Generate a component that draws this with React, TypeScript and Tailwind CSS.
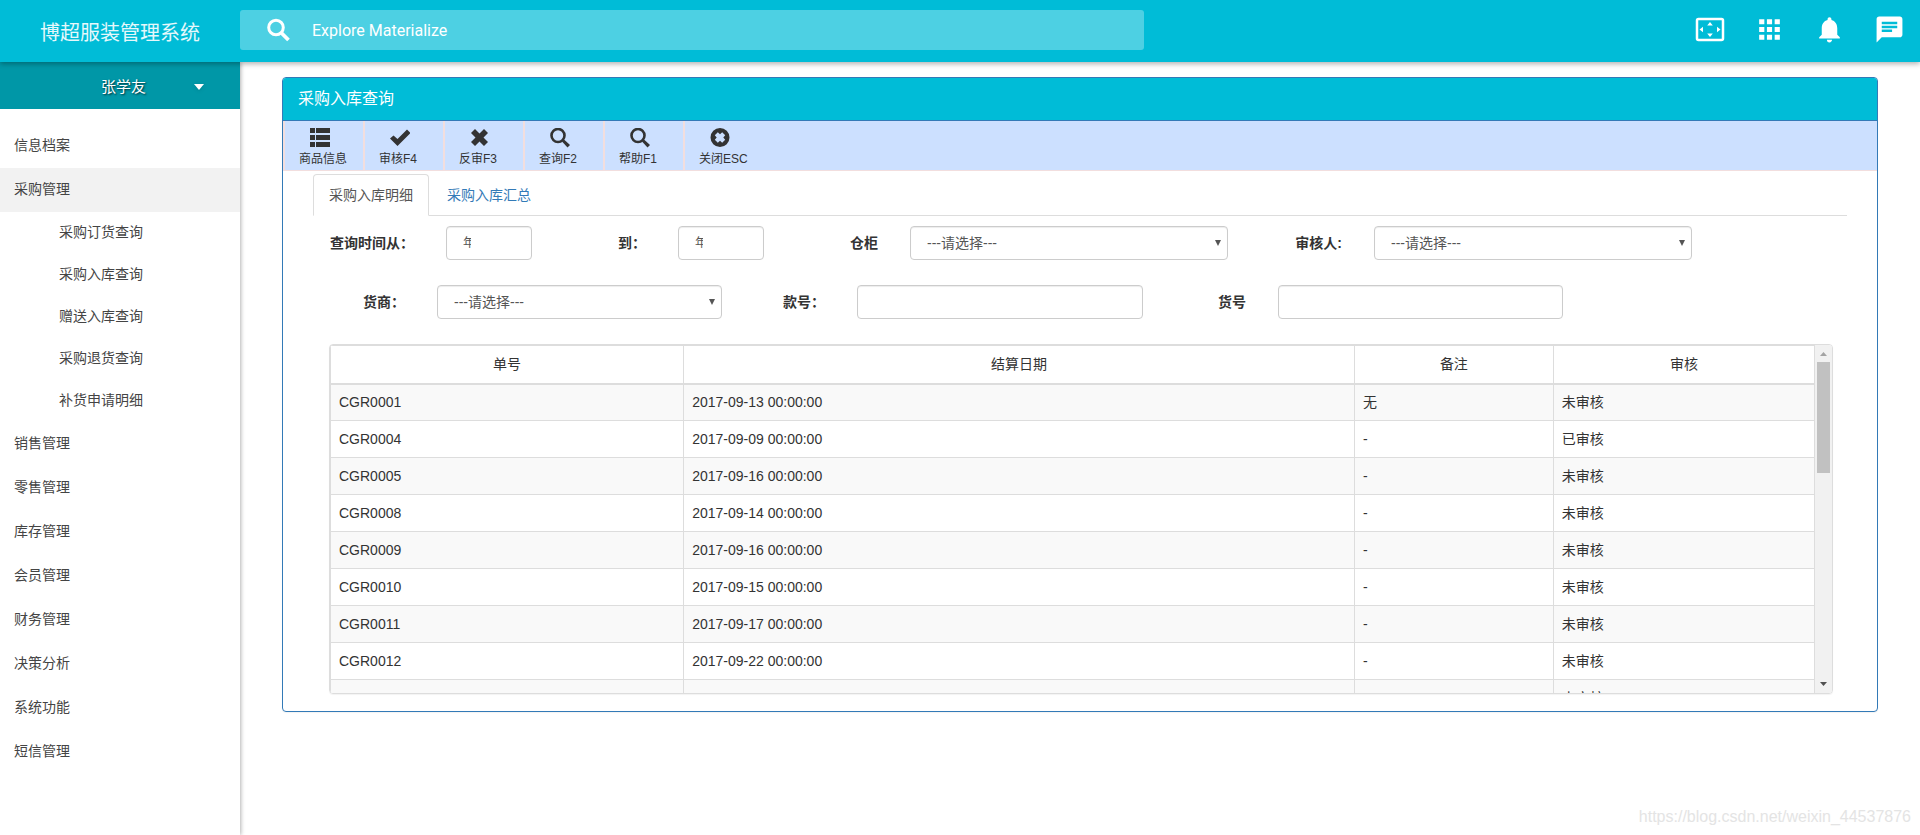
import React, { useState } from 'react';
import { MdApps, MdChat, MdNotifications } from 'react-icons/md';
import { clsx } from 'clsx';

type MenuItem = {
  label: string;
  children?: string[];
};

type Receipt = {
  no: string;
  date: string;
  remark: string;
  status: string;
};

const menu: MenuItem[] = [
  { label: '信息档案' },
  { label: '采购管理', children: ['采购订货查询', '采购入库查询', '赠送入库查询', '采购退货查询', '补货申请明细'] },
  { label: '销售管理' },
  { label: '零售管理' },
  { label: '库存管理' },
  { label: '会员管理' },
  { label: '财务管理' },
  { label: '决策分析' },
  { label: '系统功能' },
  { label: '短信管理' },
];

const receipts: Receipt[] = [
  { no: 'CGR0001', date: '2017-09-13 00:00:00', remark: '无', status: '未审核' },
  { no: 'CGR0004', date: '2017-09-09 00:00:00', remark: '-', status: '已审核' },
  { no: 'CGR0005', date: '2017-09-16 00:00:00', remark: '-', status: '未审核' },
  { no: 'CGR0008', date: '2017-09-14 00:00:00', remark: '-', status: '未审核' },
  { no: 'CGR0009', date: '2017-09-16 00:00:00', remark: '-', status: '未审核' },
  { no: 'CGR0010', date: '2017-09-15 00:00:00', remark: '-', status: '未审核' },
  { no: 'CGR0011', date: '2017-09-17 00:00:00', remark: '-', status: '未审核' },
  { no: 'CGR0012', date: '2017-09-22 00:00:00', remark: '-', status: '未审核' },
  { no: '', date: '', remark: '', status: '未审核' },
];

const listIcon = <path d="M0 0h5v5H0zM6 0h14v5H6zM0 7h5v5H0zM6 7h14v5H6zM0 14h5v5H0zM6 14h14v5H6z" />;
const checkIcon = <path d="M17 1.500 20.500 5 7.500 18 0 10.500 3.500 7.500l4 3.500z" />;
const removeIcon = (
  <path d="M5 1 9.500 5.500 14 1l4 4-4.500 4.500L18 14l-4 4-4.500-4.500L5 18l-4-4 4.500-4.500L1 5z" />
);
const searchIcon = (
  <>
    <circle cx="8" cy="7.500" r="6.500" fill="none" stroke="currentColor" strokeWidth="2.600" />
    <path d="m12 13.500 2-2 6 5.500-2.500 2.500z" />
  </>
);
const closeIcon = (
  <path
    fillRule="evenodd"
    d="M10 0a9.500 9.500 0 1 1 0 19 9.500 9.500 0 0 1 0-19zM10 6.200 7.800 4.300 4.800 7.300 6.700 9.500 4.800 11.700 7.800 14.700 10 12.800l2.200 1.900 3-3-1.900-2.200 1.900-2.200-3-3z"
  />
);

const tools = [
  { label: '商品信息', icon: listIcon },
  { label: '审核F4', icon: checkIcon },
  { label: '反审F3', icon: removeIcon },
  { label: '查询F2', icon: searchIcon },
  { label: '帮助F1', icon: searchIcon },
  { label: '关闭ESC', icon: closeIcon },
];

const tabs = ['采购入库明细', '采购入库汇总'];

const controlClass =
  'block w-full min-w-0 h-[34px] rounded-[4px] border border-[#ccc] bg-white pl-4 text-[#555] shadow-[inset_0_1px_1px_rgba(0,0,0,0.075)] outline-none focus:border-[#66afe9]';

function FieldLabel({ id, children }: { id: string; children: React.ReactNode }) {
  return (
    <label htmlFor={id} className="pr-8 text-right text-sm font-bold whitespace-nowrap">
      {children}
    </label>
  );
}

function SelectField({ id }: { id: string }) {
  return (
    <div className="relative">
      <select id={id} className={clsx(controlClass, 'appearance-none pr-6 text-sm')}>
        <option>---请选择---</option>
      </select>
      <svg className="pointer-events-none absolute top-[14px] right-[7px]" width="6" height="6" viewBox="0 0 6 6" fill="#555">
        <path d="M0 0h6L3 6z" />
      </svg>
    </div>
  );
}

function DateField({ id }: { id: string }) {
  return <input id={id} type="text" defaultValue="年/月/日" className={clsx(controlClass, 'pr-[60px] pb-[3px] text-xs')} />;
}

function Header() {
  return (
    <header className="relative z-20 flex h-[62px] items-center bg-[#00bcd7] text-white shadow-[0_2px_5px_rgba(0,0,0,0.3)]">
      <h1 className="w-[240px] shrink-0 pt-1 pl-10 text-xl font-normal whitespace-nowrap text-white/90">博超服装管理系统</h1>
      <div className="mb-[2px] flex h-10 w-[904px] shrink items-center rounded-[3px] bg-white/30 pl-[27px]">
        <svg className="shrink-0" width="24" height="24" viewBox="0 0 24 24" stroke="currentColor" fill="none">
          <circle cx="9" cy="9.500" r="7.300" strokeWidth="3" />
          <path d="m14.500 15 7 7" strokeWidth="3.800" />
        </svg>
        <input
          type="text"
          aria-label="Search"
          placeholder="Explore Materialize"
          className="ml-[21px] h-full w-full bg-transparent font-[Roboto] text-base placeholder-white outline-none"
        />
      </div>
      <nav className="ml-auto flex shrink-0 items-center gap-[29px] pr-[15px] pb-[3px]">
        <button type="button" aria-label="Fullscreen">
          <svg width="31" height="31" viewBox="0 0 31 31" fill="currentColor">
            <rect x="3" y="5" width="26" height="21" rx="1.500" fill="none" stroke="currentColor" strokeWidth="2.500" />
            <path d="M16 8l2.800 3.500h-5.600zM16 23l-2.800-3.500h5.600zM5.500 15.500 9 12.700v5.600zM26.500 15.500 23 12.700v5.600z" />
          </svg>
        </button>
        <button type="button" aria-label="Apps">
          <MdApps size={31} />
        </button>
        <button type="button" aria-label="Notifications">
          <MdNotifications size={31} />
        </button>
        <button type="button" aria-label="Messages">
          <MdChat size={31} />
        </button>
      </nav>
    </header>
  );
}

function Sidebar() {
  const [open, setOpen] = useState('采购管理');

  return (
    <aside className="relative z-10 w-[240px] shrink-0 bg-white text-sm text-[#444] shadow-[1px_0_4px_rgba(0,0,0,0.3)]">
      <button
        type="button"
        className="flex h-[47px] w-full items-center bg-[#0097a7] pt-[2px] pr-9 pl-[101px] text-[15px] text-white text-shadow-[1px_1px_2px_rgba(0,0,0,0.7)]"
      >
        张学友
        <svg className="ml-auto drop-shadow" width="10" height="6" viewBox="0 0 10 6" fill="currentColor">
          <path d="M0 0h10L5 6z" />
        </svg>
      </button>
      <ul className="pt-[15px]">
        {menu.map((item) => (
          <li key={item.label}>
            <a
              href="#"
              onClick={() => setOpen(item.label)}
              className={clsx('flex h-11 items-center pb-[2px] pl-[14px]', open === item.label && 'bg-[#f2f2f2]')}
            >
              {item.label}
            </a>
            {item.children && open === item.label && (
              <ul>
                {item.children.map((child) => (
                  <li key={child}>
                    <a href="#" className="flex h-[42px] items-center pb-[2px] pl-[59px]">
                      {child}
                    </a>
                  </li>
                ))}
              </ul>
            )}
          </li>
        ))}
      </ul>
    </aside>
  );
}

function ReceiptTable() {
  return (
    <div className="mt-[25px] flex h-[350px] overflow-hidden rounded-[4px] border border-[#ddd] shadow-[0_1px_1px_rgba(0,0,0,0.05)]">
      <div className="min-w-0 flex-1 overflow-hidden">
        <table className="w-full table-fixed border-collapse border border-[#ddd] text-sm">
          <colgroup>
            <col className="w-[23.8%]" />
            <col className="w-[45.2%]" />
            <col className="w-[13.4%]" />
            <col className="w-[17.6%]" />
          </colgroup>
          <thead>
            <tr>
              {['单号', '结算日期', '备注', '审核'].map((title) => (
                <th key={title} className="h-[38px] border border-b-2 border-[#ddd] px-2 text-center font-normal">
                  {title}
                </th>
              ))}
            </tr>
          </thead>
          <tbody>
            {receipts.map((row, i) => (
              <tr key={i} className="h-[37px] odd:bg-[#f9f9f9]">
                <td className="border border-[#ddd] px-2">{row.no}</td>
                <td className="border border-[#ddd] px-2">{row.date}</td>
                <td className="border border-[#ddd] px-2">{row.remark}</td>
                <td className="border border-[#ddd] px-2">{row.status}</td>
              </tr>
            ))}
          </tbody>
        </table>
      </div>
      <div className="flex w-[17px] shrink-0 flex-col items-center bg-[#f1f1f1]">
        <svg width="17" height="17" viewBox="0 0 17 17" fill="#a3a3a3">
          <path d="M8.500 7 12 11H5z" />
        </svg>
        <div className="h-[111px] w-[13px] bg-[#c1c1c1]" />
        <svg className="mt-auto" width="17" height="17" viewBox="0 0 17 17" fill="#505050">
          <path d="M5 6h7l-3.500 4z" />
        </svg>
      </div>
    </div>
  );
}

export default function App() {
  const [tab, setTab] = useState(tabs[0]);

  return (
    <div className="relative flex min-h-screen flex-col overflow-hidden bg-white font-['Liberation_Sans','Noto_Sans_CJK_SC',sans-serif] text-[#333]">
      <Header />
      <div className="flex flex-1">
        <Sidebar />
        <main className="min-w-0 flex-1 pt-[15px] pr-[42px] pl-[42px]">
          <section className="rounded-[4px] border border-[#337ab7] shadow-[0_1px_1px_rgba(0,0,0,0.05)]">
            <h2 className="flex h-[43px] items-center rounded-t-[3px] border-b border-[#337ab7] bg-[#00bcd7] pl-[15px] text-base font-normal text-white">
              采购入库查询
            </h2>
            <div className="flex h-[50px] border-b border-[#f2dede] bg-[#cce0ff]">
              {tools.map((tool) => (
                <button
                  key={tool.label}
                  type="button"
                  className="flex w-20 flex-col items-start border-l-2 border-[#f2dede] pt-[7px] pl-[14px] text-xs whitespace-nowrap"
                >
                  <svg className="ml-[11px]" width="20" height="20" viewBox="0 0 20 20" fill="currentColor">
                    {tool.icon}
                  </svg>
                  <span className="mt-[3px]">{tool.label}</span>
                </button>
              ))}
            </div>
            <div className="px-[30px] pt-[3px] pb-[17px]">
              <div className="flex h-[42px] gap-[2px] border-b border-[#ddd] text-sm">
                {tabs.map((name) => (
                  <button
                    key={name}
                    type="button"
                    onClick={() => setTab(name)}
                    className={clsx(
                      '-mb-px rounded-t-[4px] border px-[15px]',
                      tab === name ? 'border-[#ddd] border-b-white bg-white text-[#555]' : 'border-transparent text-[#337ab7]'
                    )}
                  >
                    {name}
                  </button>
                ))}
              </div>
              <form className="pt-[10px] pr-[14px] pl-4">
                <div className="grid grid-cols-[117fr_86fr_146fr_86fr_146fr_318fr_146fr_318fr_141fr] items-center">
                  <FieldLabel id="from">查询时间从：</FieldLabel>
                  <DateField id="from" />
                  <FieldLabel id="to">到：</FieldLabel>
                  <DateField id="to" />
                  <FieldLabel id="depot">仓柜</FieldLabel>
                  <SelectField id="depot" />
                  <FieldLabel id="auditor">审核人:</FieldLabel>
                  <SelectField id="auditor" />
                </div>
                <div className="mt-[25px] grid grid-cols-[108fr_285fr_135fr_286fr_135fr_285fr_270fr] items-center">
                  <FieldLabel id="supplier">货商：</FieldLabel>
                  <SelectField id="supplier" />
                  <FieldLabel id="style">款号：</FieldLabel>
                  <input id="style" type="text" className={clsx(controlClass, 'text-sm')} />
                  <FieldLabel id="sku">货号</FieldLabel>
                  <input id="sku" type="text" className={clsx(controlClass, 'text-sm')} />
                </div>
                <ReceiptTable />
              </form>
            </div>
          </section>
        </main>
      </div>
      <p className="pointer-events-none absolute right-[9px] bottom-[6px] text-base text-[#e4e4e4]">
        https://blog.csdn.net/weixin_44537876
      </p>
    </div>
  );
}
